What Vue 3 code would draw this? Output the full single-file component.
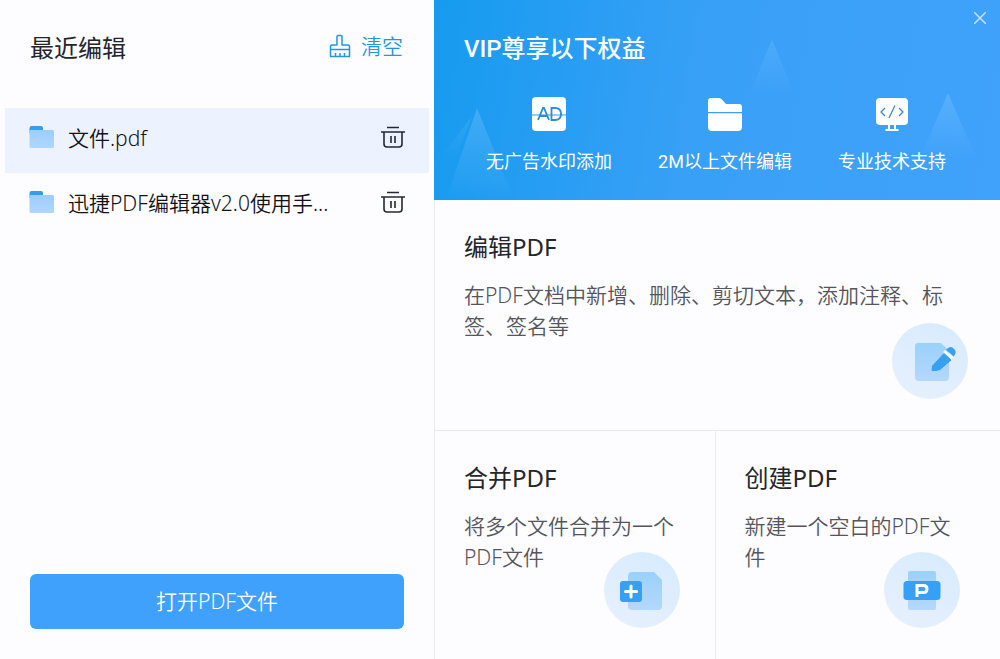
<script setup>
import { ref } from 'vue'

const files = ref(['文件.pdf', '迅捷PDF编辑器v2.0使用手...'])
const active = ref(0)
function removeFile(index) {
  files.value.splice(index, 1)
}
function clearFiles() {
  files.value = []
}
</script>

<template>
  <main class="app">
    <aside class="recent">
      <header class="recent-head">
        <h2 class="title">最近编辑</h2>
        <button class="clear" type="button" @click="clearFiles">
          <svg width="22" height="24" viewBox="0 0 22 24" fill="none" stroke="currentColor" stroke-width="1.5" stroke-linejoin="round">
            <path d="M1.500 22.500V12.500Q1.500 11 3 11H8V2.500Q8 1.500 9 1.500H12Q13 1.500 13 2.500V11H19Q20.500 11 20.500 12.500V22.500Z" />
            <path d="M1.500 15.500H20.500M6.500 19V22.500M11 19V22.500M15.500 19V22.500" />
          </svg>
          <span>清空</span>
        </button>
      </header>
      <ul class="files">
        <li v-for="(file, index) in files" :key="file" class="file" :class="{ active: index === active }">
          <button class="file-open" type="button" @click="active = index">
            <svg width="26" height="24" viewBox="0 0 26 24">
              <defs>
                <linearGradient :id="'folder' + index" x1="0" y1="0" x2="0" y2="1">
                  <stop offset="0" stop-color="#9dcdfb" />
                  <stop offset="1" stop-color="#b0d6fd" />
                </linearGradient>
              </defs>
              <path d="M0.500 8V3Q0.500 1 2.500 1H12Q14 1 14 3V8Z" fill="#319fea" />
              <rect x="0.500" y="5" width="24.500" height="18" rx="1.500" :fill="`url(#folder${index})`" />
            </svg>
            <span class="file-name">{{ file }}</span>
          </button>
          <button class="trash" type="button" :aria-label="'删除 ' + file" @click="removeFile(index)">
            <svg width="24" height="24" viewBox="0 0 24 24" fill="none" stroke="#242933" stroke-width="1.600">
              <path d="M6 2.500H18M0 7H24M3 7V19Q3 22 6 22H18Q21 22 21 19V7M10 11V18M14 11V18" />
            </svg>
          </button>
        </li>
      </ul>
      <button class="open" type="button">打开PDF文件</button>
    </aside>

    <section class="content">
      <header class="vip">
        <svg class="peaks" viewBox="0 0 566 200" preserveAspectRatio="none" aria-hidden="true">
          <defs>
            <linearGradient id="peak" x1="0" y1="0" x2="0" y2="1">
              <stop offset="0" stop-color="#8bcaff" stop-opacity=".34" />
              <stop offset="1" stop-color="#8bcaff" stop-opacity="0" />
            </linearGradient>
          </defs>
          <path d="M43 108L80 200H12Z" fill="url(#peak)" />
          <path d="M38 116L6 158L22 158Z" fill="url(#peak)" opacity=".5" />
          <path d="M338 39L360 94H316Z" fill="url(#peak)" opacity=".7" />
          <path d="M514 93L542 158H486Z" fill="url(#peak)" />
        </svg>
        <button class="close" type="button" aria-label="关闭">
          <svg width="12" height="12" viewBox="0 0 12 12" fill="none" stroke="#c5e2fc" stroke-width="1.500"><path d="M0 0L12 12M12 0L0 12" /></svg>
        </button>
        <h1 class="vip-title">VIP尊享以下权益</h1>
        <ul class="benefits">
          <li class="benefit">
            <svg width="34" height="36" viewBox="0 0 34 36">
              <rect x="0" y="1" width="34" height="34" rx="4" fill="#fff" />
              <path d="M0 19H34" stroke="#3499df" stroke-width="1" />
              <path d="M6 24L11 12H12L17 24M8 20H15M19.500 12H23Q29 12 29 18T23 24H19.500Z" fill="none" stroke="#278fd8" stroke-width="1.800" />
            </svg>
            <span>无广告水印添加</span>
          </li>
          <li class="benefit">
            <svg width="34" height="36" viewBox="0 0 34 36">
              <path d="M0 16V5Q0 2 3 2H11Q13 2 14 3.500L18 8H31Q34 8 34 11V16Z" fill="#fff" />
              <path d="M0 17.300H34V31Q34 35 30 35H4Q0 35 0 31Z" fill="#fff" />
            </svg>
            <span>2M以上文件编辑</span>
          </li>
          <li class="benefit">
            <svg width="34" height="36" viewBox="0 0 34 36">
              <rect x="1" y="2" width="32" height="27" rx="4" fill="#fff" />
              <path d="M14 28V34M20 28V34M10.500 34H23.500" stroke="#fff" stroke-width="2" />
              <path d="M10 12L6 16L10 20M24 12L28 16L24 20M20 9.500L14 22" fill="none" stroke="#3d86c5" stroke-width="1.300" />
            </svg>
            <span>专业技术支持</span>
          </li>
        </ul>
      </header>

      <div class="tools">
        <article class="tool edit">
          <h2 class="title">编辑PDF</h2>
          <p>在PDF文档中新增、删除、剪切文本，添加注释、标签、签名等</p>
          <svg class="tool-icon" viewBox="0 0 76 76" aria-hidden="true">
            <defs>
              <linearGradient id="disc" x1="0.800" y1="0" x2="0.300" y2="1">
                <stop offset="0" stop-color="#d7ebfd" />
                <stop offset="1" stop-color="#e6f0fe" />
              </linearGradient>
              <linearGradient id="sheet" x1="0" y1="0" x2="0" y2="1">
                <stop offset="0" stop-color="#9ad1fa" />
                <stop offset="1" stop-color="#b5d7fd" />
              </linearGradient>
            </defs>
            <circle cx="38" cy="38" r="38" fill="url(#disc)" />
            <path d="M26 20H49L57 28V54Q57 58 53 58H27Q23 58 23 54V23Q23 20 26 20Z" fill="url(#sheet)" />
            <path d="M40.500 43L52 30.500L59 37L48 46.500Q44 48 40 47.500Z" fill="#38a0f0" stroke="#38a0f0" stroke-width="1" stroke-linejoin="round" />
            <path d="M52 28L60.500 35.500" stroke="#f5faff" stroke-width="2.800" />
            <path d="M54 26.500L57 24.500Q58.500 23.500 60.500 24.500L63 27Q64.500 29 63 31.500L61.500 33.500Z" fill="#38a0f0" />
          </svg>
        </article>
        <article class="tool merge">
          <h2 class="title">合并PDF</h2>
          <p>将多个文件合并为一个PDF文件</p>
          <svg class="tool-icon" viewBox="0 0 76 76" aria-hidden="true">
            <circle cx="38" cy="38" r="38" fill="url(#disc)" />
            <path d="M28 20H50L58 28V54Q58 58 54 58H28Q24 58 24 54V24Q24 20 28 20Z" fill="url(#sheet)" />
            <rect x="16" y="29" width="22" height="21" rx="3" fill="#36a0f6" />
            <path d="M27 34V45M21.500 39.500H32.500" stroke="#fff" stroke-width="3" stroke-linecap="round" />
          </svg>
        </article>
        <article class="tool create">
          <h2 class="title">创建PDF</h2>
          <p>新建一个空白的PDF文件</p>
          <svg class="tool-icon" viewBox="0 0 76 76" aria-hidden="true">
            <circle cx="38" cy="38" r="38" fill="url(#disc)" />
            <rect x="24" y="19" width="28" height="39" rx="2" fill="url(#sheet)" />
            <rect x="19.500" y="29" width="37" height="19" rx="3.500" fill="#36a0f6" />
            <path d="M33 45V33.500H39.500Q43 33.500 43 37T39.500 40.500H33" fill="none" stroke="#fff" stroke-width="3" />
          </svg>
        </article>
      </div>
    </section>
  </main>
</template>

<style>
body {
  background: #fdfcff;
}
</style>

<style scoped>
.app {
  display: grid;
  grid-template-columns: 434fr 566fr;
  min-height: 100vh;
  color: #242629;
  font-family: "Noto Sans", "Noto Sans CJK SC", sans-serif;
  font-size: 21px;
  line-height: 31px;
}
h1, h2, p, ul {
  margin: 0;
  padding: 0;
  font-weight: 400;
}
ul {
  list-style: none;
}
button {
  padding: 0;
  border: 0;
  background: none;
  color: inherit;
  font: inherit;
  cursor: pointer;
}
svg {
  display: block;
  flex: none;
}
.title {
  font-size: 24px;
  line-height: 36px;
}
.recent {
  display: flex;
  flex-direction: column;
}
.recent-head {
  display: flex;
  align-items: center;
  justify-content: space-between;
  padding: 30px 31px 42px 30px;
}
.clear {
  display: flex;
  align-items: center;
  gap: 10px;
  padding-bottom: 4px;
  color: #1f98e2;
  font-weight: 350;
}
.files {
  flex: 1;
  padding: 0 5px;
}
.file {
  display: flex;
  align-items: center;
  height: 65px;
  padding: 0 24px;
}
.file.active {
  background: #edf3fe;
}
.file-open {
  display: flex;
  flex: 1;
  align-items: center;
  gap: 13px;
  min-width: 0;
  padding-bottom: 8px;
  color: #111317;
  font-weight: 350;
  text-align: left;
}
.file-name {
  padding-top: 4px;
  white-space: nowrap;
}
.trash {
  padding-bottom: 8px;
}
.open {
  height: 55px;
  margin: 0 30px 30px;
  border-radius: 6px;
  background: #40a1fc;
  color: #fff;
  font-weight: 350;
}
.content {
  display: flex;
  flex-direction: column;
}
.vip {
  position: relative;
  padding: 31px 30px 25px;
  background: linear-gradient(100deg, #159bef 0%, #39a0f7 48%, #40a2fb 100%);
  color: #fff;
}
.peaks {
  position: absolute;
  inset: 0;
  width: 100%;
  height: 100%;
}
.close {
  position: absolute;
  top: 12px;
  right: 14px;
}
.vip-title {
  position: relative;
  font-family: Roboto, "Noto Sans CJK SC", sans-serif;
  font-size: 24px;
  font-weight: 500;
  line-height: 36px;
}
.benefits {
  position: relative;
  display: flex;
  justify-content: space-between;
  padding: 29px 24px 0 22px;
}
.benefit {
  display: flex;
  flex-direction: column;
  align-items: center;
  gap: 16px;
  font-family: Roboto, "Noto Sans CJK SC", sans-serif;
  font-size: 18px;
  line-height: 27px;
}
.tools {
  display: grid;
  flex: 1;
  grid-template-columns: 281fr 285fr;
  grid-template-rows: 231fr 228fr;
  border-left: 1px solid #e9eaf0;
}
.tool {
  position: relative;
  padding: 29px;
}
.tool p {
  padding-top: 15px;
  color: #54565b;
  font-weight: 350;
}
.edit {
  grid-column: 1 / 3;
  padding-right: 40px;
  border-bottom: 1px solid #e9eaf0;
}
.merge {
  border-right: 1px solid #e9eaf0;
}
.tool-icon {
  position: absolute;
  right: 35px;
  bottom: 31px;
  width: 76px;
  height: 76px;
}
.edit .tool-icon {
  right: 32px;
}
.create .tool-icon {
  right: 40px;
}
</style>
